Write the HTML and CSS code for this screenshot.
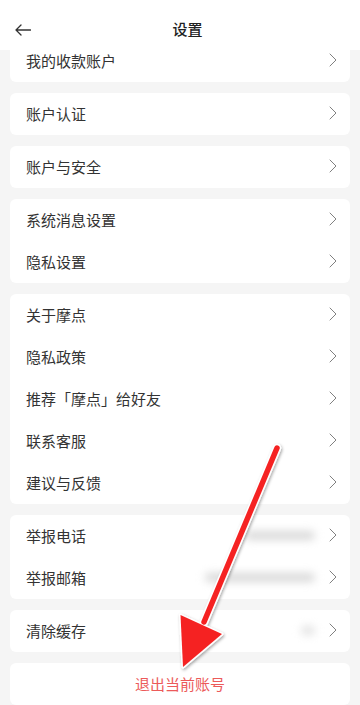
FILE: index.html
```html
<!DOCTYPE html>
<html lang="zh-CN">
<head>
<meta charset="utf-8">
<meta name="viewport" content="width=360, initial-scale=1">
<title>设置</title>
<link rel="stylesheet" href="styles.css">
</head>
<body>
<div class="app">
  <header class="topbar">
    <span class="back" aria-label="返回">
      <svg width="16" height="12" viewBox="0 0 16 12"><path d="M15.5 6H1M6 1L1 6L6 11" fill="none" stroke="#333" stroke-width="1.3" stroke-linecap="round" stroke-linejoin="round"/></svg>
    </span>
    <h1 class="title">设置</h1>
    <span class="spacer"></span>
  </header>
  <main class="scroller">
    <div class="list">
      <section class="card">
        <div class="row"><span class="label">我的收款账户</span><svg class="chev" viewBox="0 0 8 14"><path d="M1 1L7 7L1 13" /></svg></div>
      </section>
      <section class="card">
        <div class="row"><span class="label">账户认证</span><svg class="chev" viewBox="0 0 8 14"><path d="M1 1L7 7L1 13" /></svg></div>
      </section>
      <section class="card">
        <div class="row"><span class="label">账户与安全</span><svg class="chev" viewBox="0 0 8 14"><path d="M1 1L7 7L1 13" /></svg></div>
      </section>
      <section class="card">
        <div class="row"><span class="label">系统消息设置</span><svg class="chev" viewBox="0 0 8 14"><path d="M1 1L7 7L1 13" /></svg></div>
        <div class="row"><span class="label">隐私设置</span><svg class="chev" viewBox="0 0 8 14"><path d="M1 1L7 7L1 13" /></svg></div>
      </section>
      <section class="card">
        <div class="row"><span class="label">关于摩点</span><svg class="chev" viewBox="0 0 8 14"><path d="M1 1L7 7L1 13" /></svg></div>
        <div class="row"><span class="label">隐私政策</span><svg class="chev" viewBox="0 0 8 14"><path d="M1 1L7 7L1 13" /></svg></div>
        <div class="row"><span class="label">推荐「摩点」给好友</span><svg class="chev" viewBox="0 0 8 14"><path d="M1 1L7 7L1 13" /></svg></div>
        <div class="row"><span class="label">联系客服</span><svg class="chev" viewBox="0 0 8 14"><path d="M1 1L7 7L1 13" /></svg></div>
        <div class="row"><span class="label">建议与反馈</span><svg class="chev" viewBox="0 0 8 14"><path d="M1 1L7 7L1 13" /></svg></div>
      </section>
      <section class="card">
        <div class="row"><span class="label">举报电话</span><span class="blur blur-phone"></span><svg class="chev" viewBox="0 0 8 14"><path d="M1 1L7 7L1 13" /></svg></div>
        <div class="row"><span class="label">举报邮箱</span><span class="blur blur-mail"></span><svg class="chev" viewBox="0 0 8 14"><path d="M1 1L7 7L1 13" /></svg></div>
      </section>
      <section class="card">
        <div class="row"><span class="label">清除缓存</span><span class="blur blur-cache"></span><svg class="chev" viewBox="0 0 8 14"><path d="M1 1L7 7L1 13" /></svg></div>
      </section>
      <section class="card">
        <div class="row row-center"><span class="logout">退出当前账号</span></div>
      </section>
    </div>
  </main>
  <svg class="annotation" width="360" height="705" viewBox="0 0 360 705">
    <defs>
      <filter id="sh" x="-20%" y="-20%" width="140%" height="140%">
        <feDropShadow dx="1" dy="1.5" stdDeviation="1.5" flood-color="#000" flood-opacity="0.35"/>
      </filter>
    </defs>
    <g filter="url(#sh)">
      <line x1="277" y1="448" x2="204" y2="622" stroke="#fff" stroke-width="8.5" stroke-linecap="round"/>
      <polygon points="183,667 180.5,615 222,634" fill="#fff" stroke="#fff" stroke-width="3" stroke-linejoin="round"/>
      <line x1="277" y1="448" x2="204" y2="622" stroke="#f52424" stroke-width="5.5" stroke-linecap="round"/>
      <polygon points="183,667 180.5,615 222,634" fill="#f52424"/>
    </g>
  </svg>
</div>
</body>
</html>
```

FILE: styles.css
```css
* { box-sizing: border-box; }

html, body {
  margin: 0;
  padding: 0;
}

body {
  font-family: "Noto Sans CJK SC", "Noto Sans", sans-serif;
  color: #333;
  background: #f5f5f5;
}

.app {
  position: relative;
  width: 360px;
  height: 705px;
  overflow: hidden;
  display: flex;
  flex-direction: column;
}

.topbar {
  flex: 0 0 50px;
  height: 50px;
  background: #fff;
  display: grid;
  grid-template-columns: 1fr auto 1fr;
  align-items: center;
  padding: 0 0 0 15px;
  position: relative;
  z-index: 2;
}

.back {
  display: flex;
  align-items: center;
  padding-top: 10px;
}

.title {
  margin: 0;
  font-size: 15px;
  font-weight: 500;
  color: #222;
  line-height: 1;
  padding-top: 7px;
}

.scroller {
  flex: 1;
  overflow: hidden;
  background: #f5f5f5;
}

.list {
  margin-top: -10px;
  padding: 0 10px;
  display: flex;
  flex-direction: column;
  gap: 11px;
}

.card {
  background: #fff;
  border-radius: 6px;
}

.row {
  height: 42px;
  display: flex;
  align-items: center;
  padding: 0 13px 2px 16px;
}

.label {
  flex: 1;
  font-size: 15px;
  color: #333;
  line-height: 1;
}

.chev {
  width: 8px;
  height: 14px;
  fill: none;
  stroke: #808080;
  stroke-width: 1;
  stroke-linecap: round;
  stroke-linejoin: round;
}

.blur {
  height: 9px;
  background: #d9d9d9;
  border-radius: 5px;
  filter: blur(4px);
  margin-right: 14px;
}

.blur-phone { width: 70px; }
.blur-mail { width: 110px; }
.blur-cache { width: 14px; background: #e2e2e2; }

.row-center {
  justify-content: center;
  padding: 0 0 2px;
}

.logout {
  font-size: 15px;
  color: #ec5a5a;
  line-height: 1;
}

.annotation {
  position: absolute;
  left: 0;
  top: 0;
  pointer-events: none;
  z-index: 3;
}
```
